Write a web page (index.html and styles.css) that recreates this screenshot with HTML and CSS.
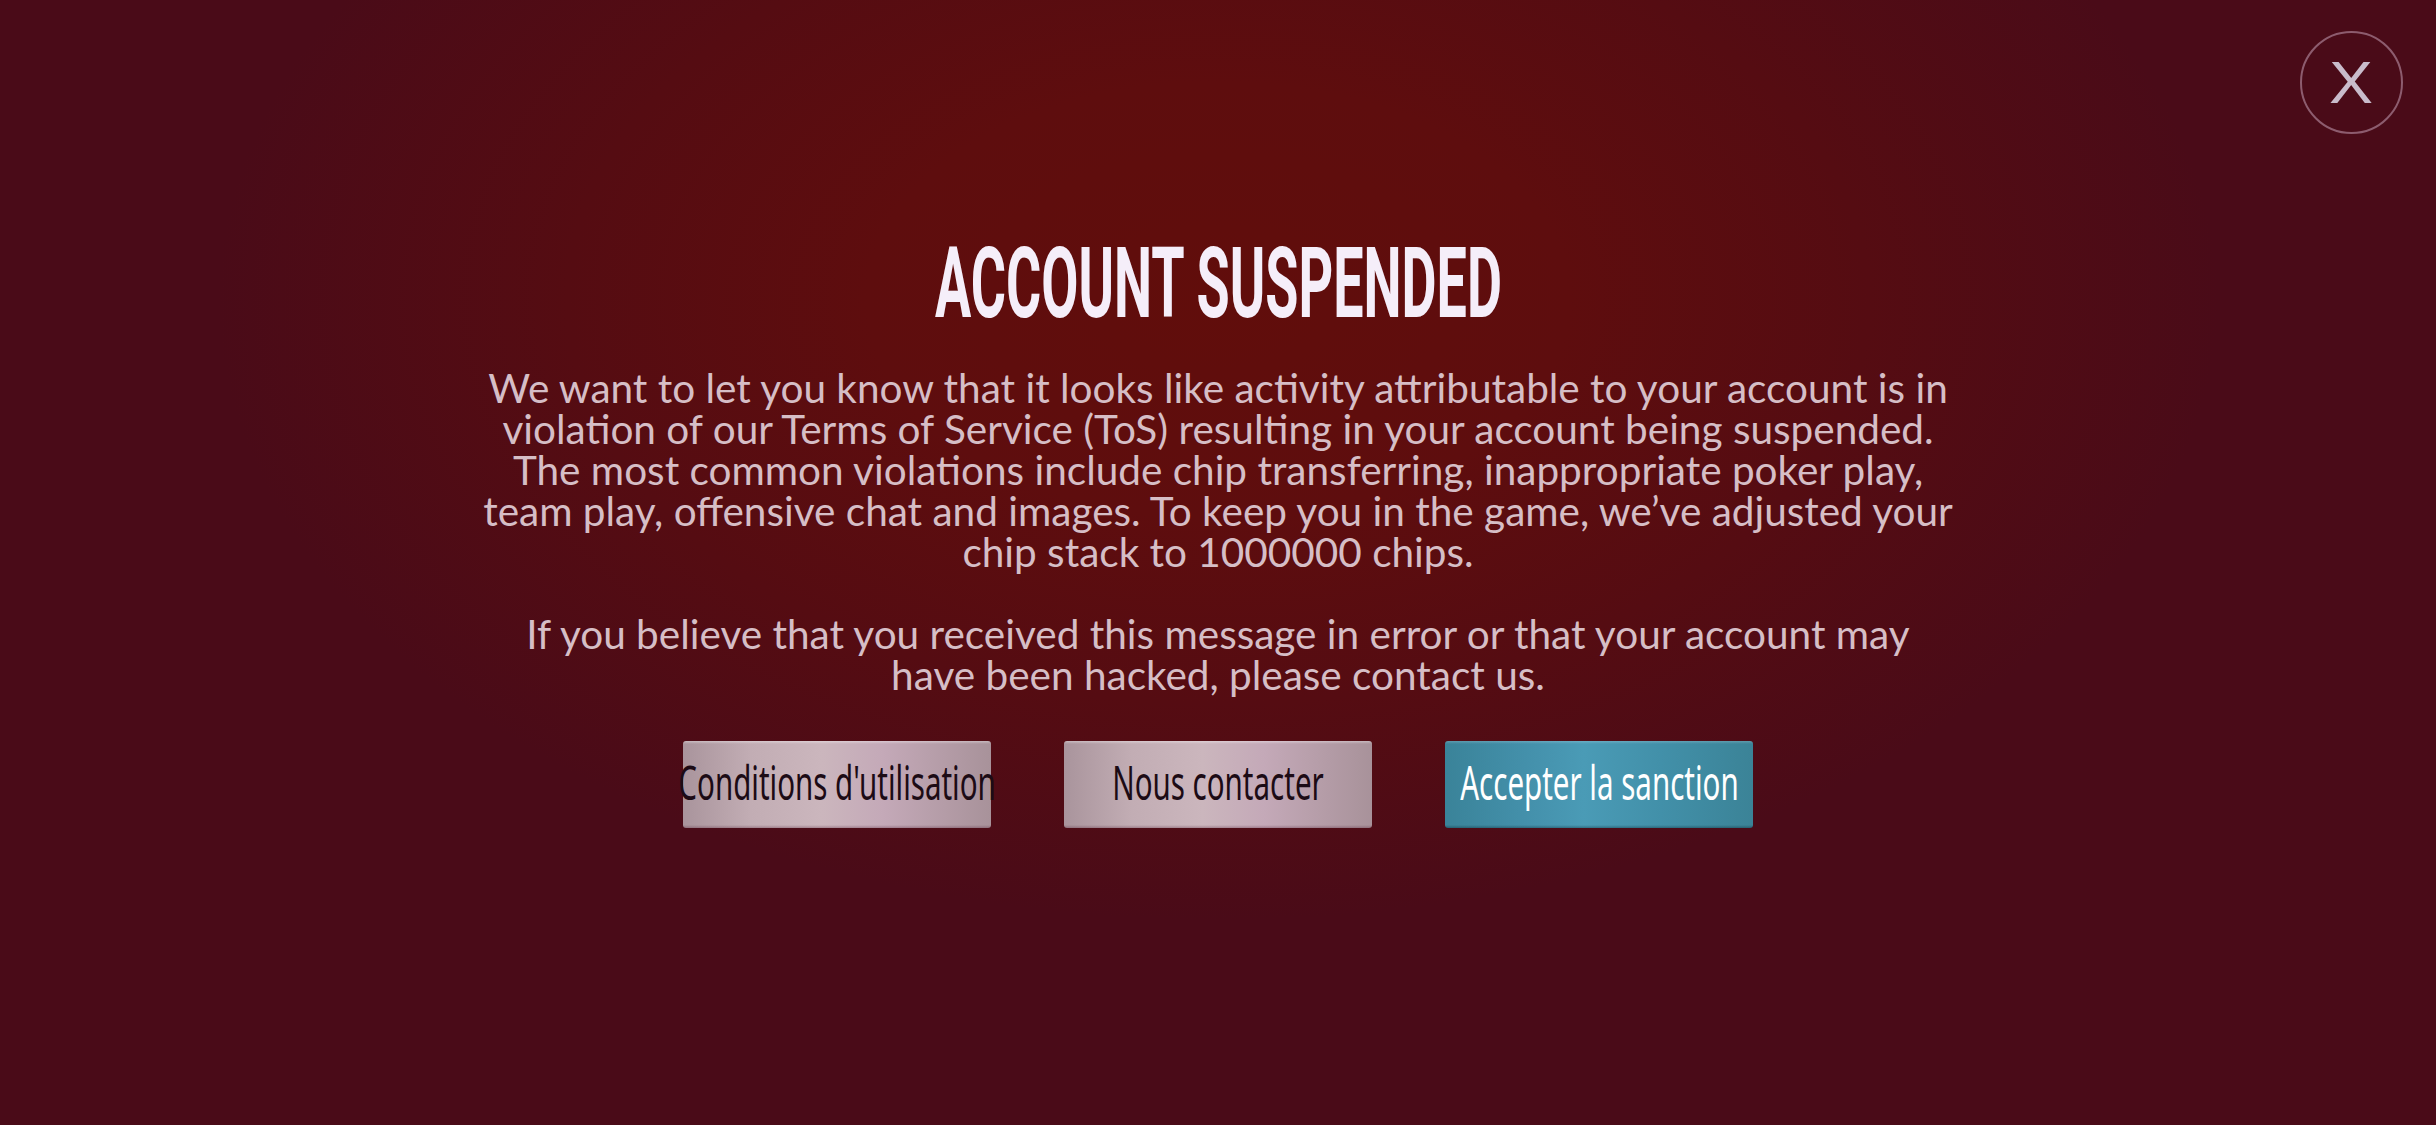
FILE: index.html
```html
<!DOCTYPE html>
<html lang="en">
<head>
<meta charset="utf-8">
<title>Account suspended</title>
<link rel="stylesheet" href="styles.css">
</head>
<body>
<div class="screen">
  <button class="close" aria-label="Close"><span class="close-x">X</span></button>
  <main class="dialog">
    <h1 class="title"><span class="title-text">ACCOUNT SUSPENDED</span></h1>
    <div class="message">
      <p>We want to let you know that it looks like activity attributable to your account is in violation of our Terms of Service (ToS) resulting in your account being suspended. The most common violations include chip transferring, inappropriate poker play, team play, offensive chat and images. To keep you in the game, we’ve adjusted your chip stack to 1000000 chips.</p>
      <p>If you believe that you received this message in error or that your account may<br>have been hacked, please contact us.</p>
    </div>
    <div class="actions">
      <button class="btn btn-light"><span class="btn-label">Conditions d'utilisation</span></button>
      <button class="btn btn-light"><span class="btn-label">Nous contacter</span></button>
      <button class="btn btn-teal"><span class="btn-label">Accepter la sanction</span></button>
    </div>
  </main>
</div>
</body>
</html>
```

FILE: styles.css
```css
html, body {
  margin: 0;
  padding: 0;
}

body {
  width: 2436px;
  height: 1125px;
  overflow: hidden;
  background: #4a0b18;
}

.screen {
  position: relative;
  width: 2436px;
  height: 1125px;
  background:
    radial-gradient(ellipse 1000px 620px at 1218px 300px, #610d0b 0%, #5e0d0e 35%, #550c12 65%, #4a0b18 100%);
}

.close {
  position: absolute;
  top: 31px;
  right: 33px;
  width: 103px;
  height: 103px;
  border-radius: 50%;
  border: 2px solid rgba(196, 160, 182, 0.55);
  background: transparent;
  padding: 0;
  display: flex;
  align-items: center;
  justify-content: center;
  cursor: pointer;
}

.close-x {
  display: inline-block;
  font-family: "Liberation Sans", Arial, sans-serif;
  font-size: 60px;
  line-height: 1;
  color: #c9bccb;
  transform: scaleX(1.1);
}

.dialog {
  display: flex;
  flex-direction: column;
  align-items: center;
  padding-top: 232px;
}

.title {
  margin: 0;
  font-family: "Roboto", "Liberation Sans", sans-serif;
  font-weight: 700;
  font-size: 98px;
  line-height: 104px;
  color: #f5eef9;
  letter-spacing: 0;
}

.title-text {
  display: inline-block;
  transform: scaleX(0.55);
}

.message {
  width: 1490px;
  margin-top: 31px;
  font-family: "Lato", "Liberation Sans", sans-serif;
  font-size: 40.5px;
  line-height: 41px;
  color: #d6bec6;
  text-align: center;
}

.message p {
  margin: 0;
}

.message p + p {
  margin-top: 41px;
}

.actions {
  display: flex;
  gap: 73px;
  margin-top: 46px;
}

.btn {
  width: 308px;
  height: 87px;
  border: 0;
  border-radius: 3px;
  padding: 0 0 6px;
  display: flex;
  align-items: center;
  justify-content: center;
  overflow: visible;
  white-space: nowrap;
  cursor: pointer;
}

.btn-light {
  background:
    linear-gradient(180deg, rgba(255,255,255,0.35) 0, rgba(255,255,255,0) 3px, rgba(0,0,0,0) 84px, rgba(90,40,60,0.35) 87px),
    linear-gradient(90deg, #a9949c 0%, #c2adb4 22%, #cbb6bd 45%, #c4a9b8 65%, #a8929a 100%);
  color: #1c0b15;
}

.btn-teal {
  background:
    linear-gradient(180deg, rgba(255,255,255,0.18) 0, rgba(255,255,255,0) 3px, rgba(0,0,0,0) 84px, rgba(0,30,40,0.35) 87px),
    linear-gradient(90deg, #3a8399 0%, #4592ad 30%, #4a9bb6 45%, #4290a9 70%, #3b8397 100%);
  color: #ffffff;
}

.btn-label {
  display: inline-block;
  font-family: "Noto Sans", "Open Sans", sans-serif;
  font-size: 48px;
  line-height: 1;
  transform: scaleX(0.615);
}
```
